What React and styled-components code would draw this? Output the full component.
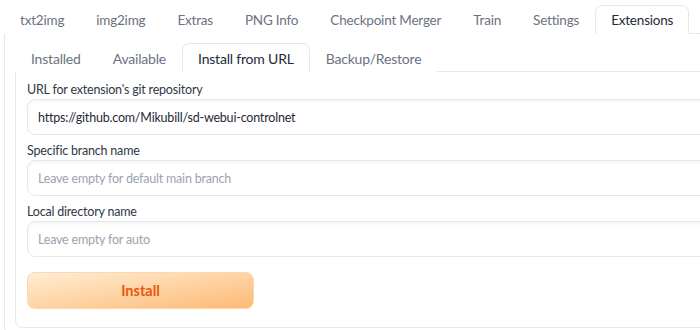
import React from "react"
import styled, { createGlobalStyle } from "styled-components"

const Global = createGlobalStyle`
    html, body {
        margin: 0;
        padding: 0;
        background: #ffffff;
        overflow: hidden;
    }
    body {
        font-family: "Lato", "Noto Sans", sans-serif;
    }
`

const Page = styled.div`
    width: 760px;
    padding: 5px 0 0 4px;
`

const TabBar = styled.div`
    display: flex;
    align-items: flex-end;
`

const Tab = styled.div`
    height: 28px;
    padding: 0 15px;
    display: flex;
    align-items: center;
    font-size: ${(props) => props.size}px;
    letter-spacing: -0.2px;
    color: ${(props) => (props.active ? "#1f2937" : "#6b7280")};
    background: #ffffff;
    border: 1px solid ${(props) => (props.active ? "#e5e7eb" : "transparent")};
    border-bottom: none;
    border-radius: 7px 7px 0 0;
    margin-bottom: -1px;
    position: relative;
    z-index: 1;
    box-sizing: content-box;
    white-space: nowrap;
`

const Panel = styled.div`
    border: 1px solid #e5e7eb;
    border-radius: 0 0 0 8px;
    padding: 9px 0 6px 10px;
`

const InnerPanel = styled.div`
    border: 1px solid #e5e7eb;
    border-radius: 0 0 0 8px;
    padding: 9px 0 18px 11px;
    display: flex;
    flex-direction: column;
`

const Label = styled.div`
    font-size: 12.5px;
    letter-spacing: -0.2px;
    line-height: 18px;
    color: #2f3846;
`

const Input = styled.div`
    height: 36px;
    box-sizing: border-box;
    border: 1px solid #e5e7eb;
    border-radius: 8px;
    box-shadow: inset 0 2px 3px rgba(0, 0, 0, 0.04);
    padding: 0 10px;
    display: flex;
    align-items: center;
    font-size: 12.5px;
    letter-spacing: -0.2px;
    color: ${(props) => (props.placeholder ? "#9ca3af" : "#1f2937")};
    margin-bottom: 7px;
`

const Button = styled.div`
    width: 227px;
    height: 37px;
    box-sizing: border-box;
    margin-top: 8px;
    border: 1px solid #fed7aa;
    border-radius: 8px;
    background: linear-gradient(to bottom right, #ffedd5, #fdba74);
    display: flex;
    align-items: center;
    justify-content: center;
    font-size: 14.5px;
    font-weight: 700;
    color: #ea580c;
`

const topTabs = ["txt2img", "img2img", "Extras", "PNG Info", "Checkpoint Merger", "Train", "Settings", "Extensions"]
const subTabs = ["Installed", "Available", "Install from URL", "Backup/Restore"]

const fields = [
    { label: "URL for extension's git repository", value: "https://github.com/Mikubill/sd-webui-controlnet" },
    { label: "Specific branch name", hint: "Leave empty for default main branch" },
    { label: "Local directory name", hint: "Leave empty for auto" },
]

export default function App() {
    return (
        <>
            <Global />
            <Page>
                <TabBar>
                    {topTabs.map((t) => (
                        <Tab key={t} size={13.5} active={t === "Extensions"}>
                            {t}
                        </Tab>
                    ))}
                </TabBar>
                <Panel>
                    <TabBar>
                        {subTabs.map((t) => (
                            <Tab key={t} size={14} active={t === "Install from URL"}>
                                {t}
                            </Tab>
                        ))}
                    </TabBar>
                    <InnerPanel>
                        {fields.map((f) => (
                            <React.Fragment key={f.label}>
                                <Label>{f.label}</Label>
                                <Input placeholder={f.hint ? 1 : 0}>{f.value || f.hint}</Input>
                            </React.Fragment>
                        ))}
                        <Button>Install</Button>
                    </InnerPanel>
                </Panel>
            </Page>
        </>
    )
}
